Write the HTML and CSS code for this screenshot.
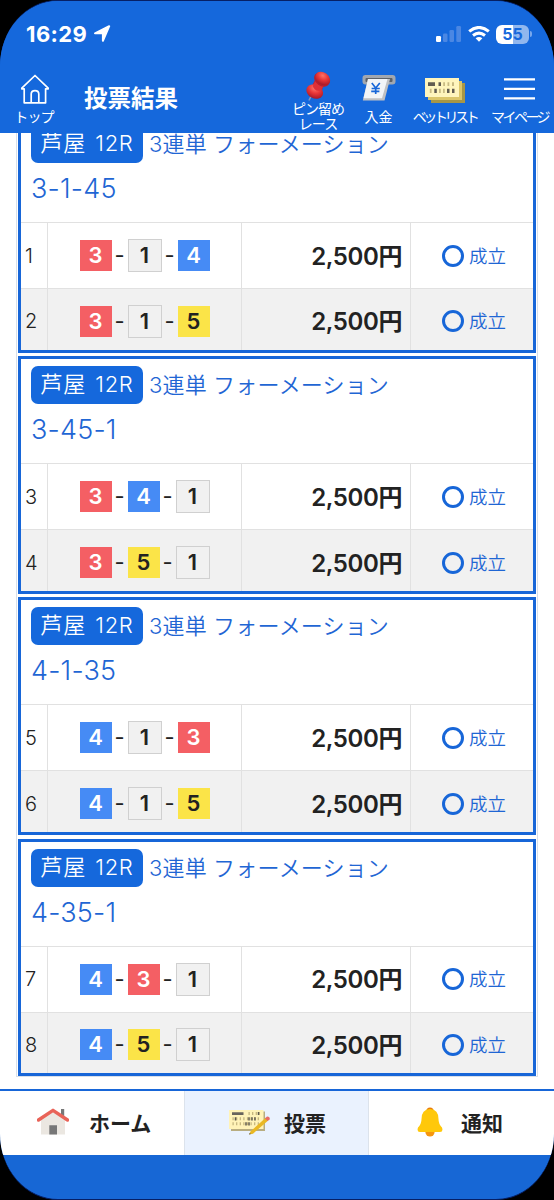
FILE: index.html
```html
<!DOCTYPE html>
<html lang="ja">
<head>
	<meta charset="UTF-8">
	<title>投票結果</title>
	<link rel="stylesheet" href="styles.css">
</head>
<body>
<div class="phone">
	<header class="header">
		<div class="status">
			<span class="time">16:29</span>
			<svg class="arrow" width="18" height="18" viewBox="0 0 18 18"><path d="M16.2 1.2L9.9 15.8V8.3H2Z" fill="#fff" stroke="#fff" stroke-width="2" stroke-linejoin="round"/></svg>
			<div class="signals">
				<svg width="26" height="16" viewBox="0 0 26 16"><rect x="0" y="10" width="5" height="6" rx="1.2" fill="#fff"/><g fill="#4b87e3"><rect x="7" y="7.5" width="4.5" height="8.5" rx="1.2"/><rect x="13.5" y="4" width="4.5" height="12" rx="1.2"/><rect x="20.3" y="0" width="4.7" height="16" rx="1.2"/></g></svg>
				<svg width="22" height="16" viewBox="0 0 22 16"><g fill="none" stroke="#fff" stroke-width="3.1"><path d="M1.2 5.4Q11-2.4 20.8 5.4"/><path d="M5 9.4Q11 4.8 17 9.4"/></g><path d="M7.6 12.2Q11 9.6 14.4 12.2L11 15.8Z" fill="#fff"/></svg>
				<div class="battery">55</div>
				<i class="cap"></i>
			</div>
		</div>
		<div class="bar">
			<a class="tool top">
				<svg width="30" height="31" viewBox="0 0 30 31"><path d="M1.8 14.2L15 1.5L28.2 14.2V14.8H25.6V28.8H18.8V20Q18.8 16.6 15 16.6T11.2 20V28.8H4.2V14.8H1.8ZM11.2 28.8H18.8" fill="none" stroke="#fff" stroke-width="1.7" stroke-linejoin="round"/></svg>
				<span>トップ</span>
			</a>
			<h1>投票結果</h1>
			<a class="tool pin">
				<svg width="28" height="30" viewBox="0 0 28 32">
					<defs><radialGradient id="red" cx=".4" cy=".3" r=".7"><stop offset="0" stop-color="#ff7468"/><stop offset=".5" stop-color="#e93638"/><stop offset="1" stop-color="#aa1a2a"/></radialGradient></defs>
					<path d="M6.5 27L4.3 31.5" stroke="#8295bd" stroke-width="1.6"/>
					<path d="M11 9L20 16L17 23L6 19Z" fill="#c82330"/>
					<ellipse cx="10.5" cy="22" rx="9.3" ry="7.2" transform="rotate(28 10.5 22)" fill="url(#red)"/>
					<path d="M11.5 10L20 16L16.5 21Q10 22 8.5 16Z" fill="#df3036"/>
					<ellipse cx="18.3" cy="9" rx="9" ry="7" transform="rotate(35 18.3 9)" fill="#b71f2d"/>
					<ellipse cx="19" cy="8" rx="8.5" ry="6.4" transform="rotate(35 19 8)" fill="url(#red)"/>
				</svg>
				<span>ピン留め</span>
				<span>レース</span>
			</a>
			<a class="tool deposit">
				<svg width="34" height="28" viewBox="0 0 34 28"><rect x=".5" y="1" width="33" height="9.5" rx="3" fill="#a1a7b0"/><rect x="3.5" y="4" width="27" height="4" rx="1" fill="#5c6168"/><path d="M6 5H28L22.5 26.5H.8Z" fill="#bfc0c3"/><path d="M6 5H25.5L20 24.2H1.5Z" fill="#f2f4f7"/><path d="M9.8 9L13.7 14L17.8 9M13.7 14V20M9.6 14.5H17.8M9.2 17.3H17.4" fill="none" stroke="#1766d8" stroke-width="1.7"/></svg>
				<span>入金</span>
			</a>
			<a class="tool list">
				<svg width="40" height="25" viewBox="0 0 40 25"><path d="M6 5H40V25H6Z" fill="#a79646"/><path d="M3 3H37V22H3Z" fill="#dcc66a"/><path d="M0 0H34V19H0Z" fill="#fff5bd"/><path d="M3 4.3H10V8H3ZM13.5 4.3H16V8H13.5ZM9.3 10.8H11.8V15H9.3ZM22 10.8H24.5V15H22ZM27 10.8H29.5V15H27Z" fill="#625c50"/><path d="M18.2 4.3H20V8H18.2ZM22.5 4.3H24.3V8H22.5ZM27 4.3H29V8H27ZM4.8 10.8H6.6V15H4.8ZM14 10.8H15.8V15H14ZM18 10.8H19.8V15H18Z" fill="#c9bb83"/></svg>
				<span>ベットリスト</span>
			</a>
			<a class="tool mypage">
				<svg width="31" height="24" viewBox="0 0 31 24"><path d="M0 2.3H31M0 11.8H31M0 21.3H31" stroke="#fff" stroke-width="2.3"/></svg>
				<span>マイページ</span>
			</a>
		</div>
	</header>

	<main class="results">
		<div class="sheet">
			<section class="card">
				<div class="head"><p><b class="race">芦屋 12R</b><span class="type">3連単 フォーメーション</span></p><h2>3-1-45</h2></div>
				<div class="row"><span class="no">1</span><div class="combo"><b class="n3">3</b><i>-</i><b class="n1">1</b><i>-</i><b class="n4">4</b></div><span class="price">2,500円</span><span class="state">成立</span></div>
				<div class="row"><span class="no">2</span><div class="combo"><b class="n3">3</b><i>-</i><b class="n1">1</b><i>-</i><b class="n5">5</b></div><span class="price">2,500円</span><span class="state">成立</span></div>
			</section>
			<section class="card">
				<div class="head"><p><b class="race">芦屋 12R</b><span class="type">3連単 フォーメーション</span></p><h2>3-45-1</h2></div>
				<div class="row"><span class="no">3</span><div class="combo"><b class="n3">3</b><i>-</i><b class="n4">4</b><i>-</i><b class="n1">1</b></div><span class="price">2,500円</span><span class="state">成立</span></div>
				<div class="row"><span class="no">4</span><div class="combo"><b class="n3">3</b><i>-</i><b class="n5">5</b><i>-</i><b class="n1">1</b></div><span class="price">2,500円</span><span class="state">成立</span></div>
			</section>
			<section class="card">
				<div class="head"><p><b class="race">芦屋 12R</b><span class="type">3連単 フォーメーション</span></p><h2>4-1-35</h2></div>
				<div class="row"><span class="no">5</span><div class="combo"><b class="n4">4</b><i>-</i><b class="n1">1</b><i>-</i><b class="n3">3</b></div><span class="price">2,500円</span><span class="state">成立</span></div>
				<div class="row"><span class="no">6</span><div class="combo"><b class="n4">4</b><i>-</i><b class="n1">1</b><i>-</i><b class="n5">5</b></div><span class="price">2,500円</span><span class="state">成立</span></div>
			</section>
			<section class="card">
				<div class="head"><p><b class="race">芦屋 12R</b><span class="type">3連単 フォーメーション</span></p><h2>4-35-1</h2></div>
				<div class="row"><span class="no">7</span><div class="combo"><b class="n4">4</b><i>-</i><b class="n3">3</b><i>-</i><b class="n1">1</b></div><span class="price">2,500円</span><span class="state">成立</span></div>
				<div class="row"><span class="no">8</span><div class="combo"><b class="n4">4</b><i>-</i><b class="n5">5</b><i>-</i><b class="n1">1</b></div><span class="price">2,500円</span><span class="state">成立</span></div>
			</section>
		</div>
	</main>

	<nav class="tabs">
		<a class="home">
			<svg width="32" height="27" viewBox="0 0 32 27"><path d="M24 1H27.2V9H24Z" fill="#777"/><path d="M4 11L16 3L28 11V26.5H4Z" fill="#ebe7e1"/><path d="M12.3 17.3H20V26.5H12.3Z" fill="#777"/><path d="M1.5 12L16 2.3L30.5 12" fill="none" stroke="#e96358" stroke-width="3.4" stroke-linecap="round" stroke-linejoin="round"/></svg>
			<span>ホーム</span>
		</a>
		<a class="vote on">
			<svg width="41" height="26" viewBox="0 0 41 26"><path d="M2 2.5H36V22H2Z" fill="#b8ad80"/><path d="M0 1H34.5V20H0Z" fill="#fff3b8"/><path d="M3 3.3H14.5V6H3Z" fill="#68645c"/><path d="M19.5 4.6H31M3.5 9.8H31M3.5 14.8H31" stroke="#c1b27b" stroke-width="3" stroke-dasharray="1.2 2.4"/><path d="M6.5 8.2V11.5M20 8.2V11.5M23 8.2V11.5M26 8.2V11.5M17 13.2V16.5M20 13.2V16.5M29.5 3V6" stroke="#5f5a4d" stroke-width="1.5"/><path d="M21.5 22.5L37 8.5L39.5 11.2L24 24.7L20 25.5Z" fill="#e9b824"/><path d="M36 9.4L38 7.5Q41.5 7.4 40.6 10.3L38.6 12.1Z" fill="#e96a66"/><path d="M20 25.5L20.7 23.9L22 25.1Z" fill="#555"/></svg>
			<span>投票</span>
		</a>
		<a class="news">
			<svg width="26" height="30" viewBox="0 0 26 30"><circle cx="13" cy="4" r="3.6" fill="#e97e0d"/><circle cx="13" cy="25" r="4.6" fill="#f6960f"/><path d="M13 2Q21.5 2.5 21.5 12Q21.5 17 25 20.5Q26.5 24.6 23 25H3Q-.5 24.6 1 20.5Q4.5 17 4.5 12Q4.5 2.5 13 2Z" fill="#ffc80a"/></svg>
			<span>通知</span>
		</a>
	</nav>
</div>
</body>
</html>
```

FILE: styles.css
```css
*,*:before{
	box-sizing:border-box;
	margin:0;
	padding:0;
}

body{
	background:#000;
	font-family:Inter,"Noto Sans CJK JP",sans-serif;
	color:#222;
}

.phone{
	display:flex;
	flex-direction:column;
	width:554px;
	height:1200px;
	border-top:1px solid #061f65;
	border-bottom:1px solid #061f65;
	border-radius:58px / 66px;
	background:#1767d5;
	overflow:hidden;
}

/* 上部ヘッダー */
.header{
	flex:none;
	height:132px;
	background:#1568dc;
	color:#fff;
}

.status{
	display:flex;
	align-items:center;
	height:66px;
	padding:0 22px 0 26px;
}

.time{
	width:61px;
	font-size:22px;
	line-height:26px;
	font-weight:700;
	letter-spacing:.4px;
}

.arrow{
	margin-left:6px;
}

.signals{
	display:flex;
	align-items:center;
	margin-left:auto;
}

.signals svg{
	margin-right:6px;
}

.battery{
	width:33px;
	height:19px;
	border-radius:6px;
	background:linear-gradient(90deg,#fff 53%,#91b7ee 53%);
	color:#1568dc;
	font-size:16px;
	line-height:19px;
	font-weight:700;
	text-align:center;
}

.cap{
	width:2px;
	height:6px;
	margin-left:1px;
	border-radius:0 2px 2px 0;
	background:#78a7ec;
}

.bar{
	display:flex;
	align-items:flex-start;
	height:66px;
}

.bar h1{
	width:208px;
	padding:16px 0 0 20px;
	font-size:23.5px;
	line-height:32px;
	font-weight:700;
	white-space:nowrap;
}

.tool{
	display:flex;
	flex-direction:column;
	align-items:center;
	flex:none;
	font-size:14px;
	line-height:15px;
	text-align:center;
	white-space:nowrap;
}

.top{
	width:64px;
	padding:7px 0 0 6px;
}

.top span{
	margin-top:4px;
	margin-right:2px;
	letter-spacing:-.8px;
}

.pin{
	width:92px;
	padding-top:4px;
}

.pin span{
	height:15px;
	letter-spacing:-1px;
}

.deposit{
	width:29px;
	padding-top:7px;
}

.deposit span{
	margin-top:7px;
}

.list{
	width:103px;
	padding-top:11px;
}

.list span{
	margin-top:6px;
	letter-spacing:-3.4px;
}

.mypage{
	width:47px;
	padding-top:10px;
}

.mypage span{
	margin-top:8px;
	letter-spacing:-2.5px;
}

/* 投票結果 */
.results{
	flex:1;
	display:flex;
	flex-direction:column;
	justify-content:flex-end;
	min-height:0;
	padding:0 16px 12px;
	background:#fff;
	overflow:hidden;
}

.sheet{
	display:flex;
	flex-direction:column;
	gap:3.6px;
	width:522px;
	padding:0 1px;
	border:1px solid #d8dfe9;
	border-top:0;
}

.card{
	height:237.5px;
	border:3px solid #1766d8;
	background:#fff;
}

.head{
	height:104px;
	padding:7px 0 0 10px;
	color:#1f66d4;
}

.head p{
	display:flex;
	align-items:center;
	font-size:22px;
	line-height:38px;
	white-space:nowrap;
}

.race{
	width:112px;
	height:38px;
	margin-right:6px;
	border-radius:7px;
	background:#1568dc;
	color:#fff;
	font-weight:350;
	letter-spacing:.7px;
	word-spacing:2.5px;
	line-height:36px;
	text-align:center;
}

.type{
	font-weight:350;
	letter-spacing:.15px;
	line-height:36px;
}

.head h2{
	margin-top:5px;
	font-size:27px;
	line-height:41px;
	font-weight:300;
	letter-spacing:.2px;
}

.row{
	display:grid;
	grid-template-columns:27px 194px 169px 1fr;
	height:66px;
	border-top:1px solid #e1e1e1;
}

.row:last-child{
	height:61.5px;
	background:#f1f1f1;
}

.row > *{
	display:flex;
	align-items:center;
	height:65px;
	border-right:1px solid #e1e1e1;
}

.row:last-child > *{
	height:60.5px;
	padding-top:4px;
}

.no{
	padding-left:4px;
	font-size:20px;
	font-weight:300;
}

.combo{
	justify-content:center;
}

.combo b{
	width:32px;
	height:31px;
	font-size:22px;
	line-height:31px;
	font-weight:600;
	text-align:center;
}

.combo i{
	width:16px;
	font-style:normal;
	font-size:22px;
	line-height:29px;
	text-align:center;
}

.combo .n1{
	width:34px;
	height:33px;
	border:1px solid #d0d0d0;
	background:#f1f1f1;
}

.n3{
	background:#f45f64;
	color:#fff;
}

.n4{
	background:#468bf5;
	color:#fff;
}

.n5{
	background:#fbe448;
}

.row .price{
	justify-content:flex-end;
	padding:0 8px 3px 0;
	font-size:24px;
	font-weight:600;
	letter-spacing:-.4px;
}

.row:last-child .price{
	padding-bottom:0;
	padding-top:1px;
}

.row .state{
	gap:5px;
	padding-left:31px;
	border-right:0;
	color:#1f66d4;
	font-size:18.5px;
	line-height:24px;
	font-weight:350;
}

.state:before{
	content:"";
	width:22px;
	height:22px;
	border:3px solid #1766d8;
	border-radius:50%;
}

/* 下部メニュー */
.tabs{
	flex:none;
	display:grid;
	grid-template-columns:185px 184px 1fr;
	height:66px;
	margin-bottom:44px;
	border-top:2px solid #1766d8;
	background:#fff;
}

.tabs a{
	display:flex;
	align-items:center;
	padding-bottom:3px;
	border-right:1px solid #dce3ec;
	font-size:21px;
	font-weight:700;
	white-space:nowrap;
}

.tabs a:last-child{
	border-right:0;
}

.tabs .on{
	background:#eaf2fe;
}

.tabs .home{
	gap:20px;
	padding-left:37px;
}

.tabs .vote{
	gap:14px;
	padding-left:44px;
}

.tabs .news{
	gap:18px;
	padding-left:48px;
}
```
